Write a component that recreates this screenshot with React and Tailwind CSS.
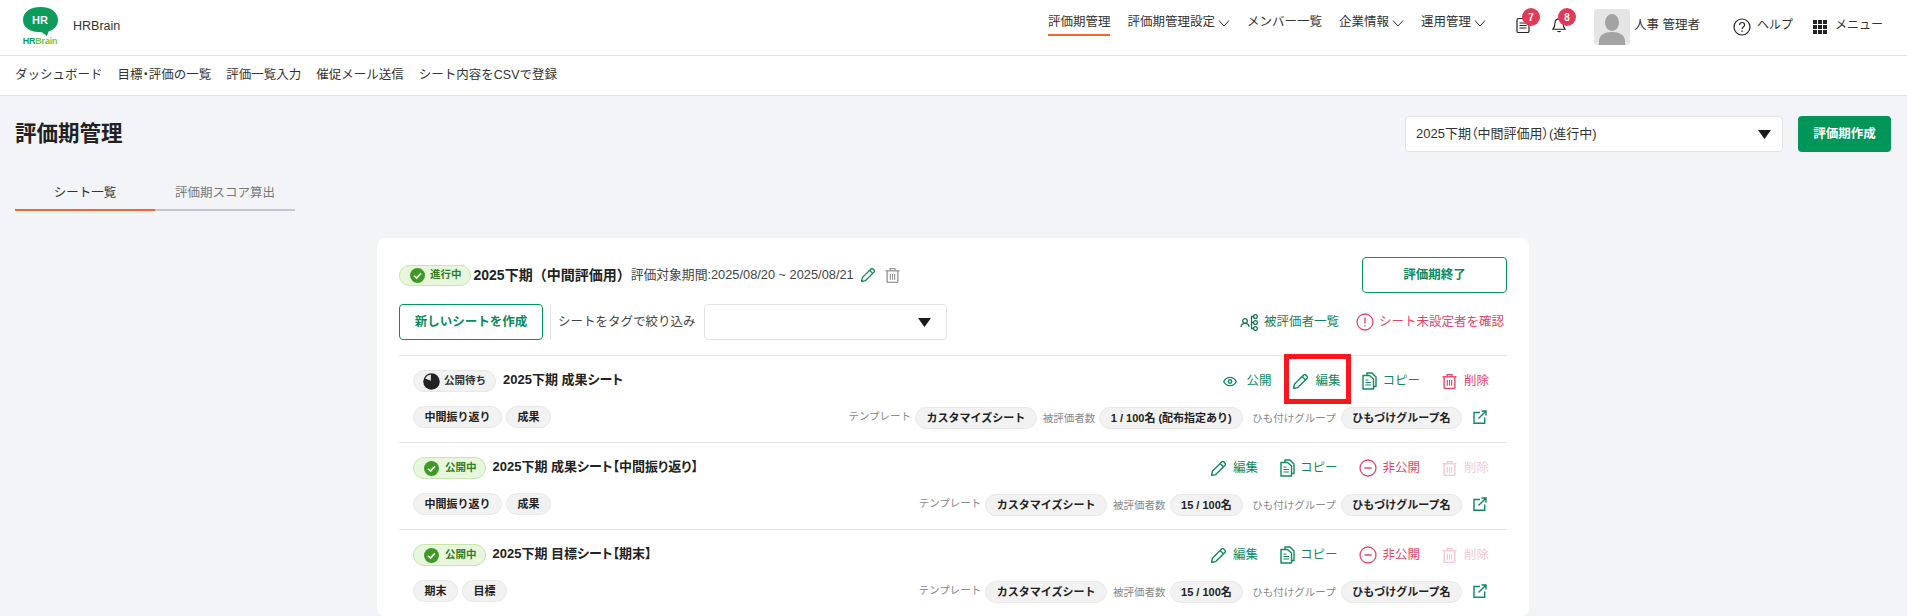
import React from "react";

const G = "#0f8a5c";
const R = "#e2476a";

const Chevron = () => (
  <svg width="12" height="12" viewBox="0 0 12 12" fill="none" stroke="#333" strokeWidth="1"><path d="M1 3.500 6 9l5-5.500" /></svg>
);
const Caret = () => (
  <svg width="13" height="9" viewBox="0 0 13 9" fill="#1a1a1a"><path d="M0 0h13L6.500 9z" /></svg>
);
const PencilI = ({ c = G, s = 15 }) => (
  <svg width={s} height={s} viewBox="1 1 14 14" fill="none" stroke={c} strokeWidth="1.300" strokeLinejoin="round"><path d="M1.500 14.500 2.300 10.600 10.900 2a1.500 1.500 0 0 1 2.100 0l1 1a1.500 1.500 0 0 1 0 2.100L5.400 13.700z" /><path d="M9.600 3.400 12.600 6.400" /></svg>
);
const TrashI = ({ c = R, s = 15 }) => (
  <svg width={s} height={s} viewBox="1 1 14 14" fill="none" stroke={c} strokeWidth="1.300"><path d="M1.500 3.600h13" /><path d="M5.800 3.400V1.500h4.400v1.900" /><path d="M3 3.800v9.700a1 1 0 0 0 1 1h8a1 1 0 0 0 1-1V3.800" /><path d="M6 6.500v5.500M8 6.500v5.500M10 6.500v5.500" strokeWidth="1.100" /></svg>
);
const CopyI = () => (
  <svg width="15" height="18" viewBox="0 0 15 18" fill="none" stroke={G} strokeWidth="1.400" strokeLinejoin="round"><path d="M5 3V1h5l4 4v9.500h-2" /><path d="M1 3.500h6.500L11.500 7v10H1z" /><path d="M3.400 8h3M3.400 10.500h5.500M3.400 13h5.500" strokeWidth="1.200" /></svg>
);
const EyeI = () => (
  <svg width="14" height="11" viewBox="0 0 16 12" fill="none" stroke={G} strokeWidth="1.500"><path d="M.8 6C2.500 2.800 5 1.200 8 1.200S13.500 2.800 15.200 6C13.500 9.200 11 10.800 8 10.800S2.500 9.200.8 6z" /><circle cx="8" cy="6" r="2" /></svg>
);
const ExtI = () => (
  <svg width="14" height="14" viewBox="0 0 14 14" fill="none" stroke={G} strokeWidth="1.400"><path d="M7 2.500H1v10.700h10.700V7.500" /><path d="M5.500 8.500 12.800 1.200M8.500 1h4.500v4.500" /></svg>
);
const CheckCircle = ({ s = 15 }) => (
  <svg width={s} height={s} viewBox="0 0 16 16"><circle cx="8" cy="8" r="8" fill="#3f9a25" /><path d="M4.300 8.300 7 10.800 11.700 5.600" fill="none" stroke="#fff" strokeWidth="1.700" /></svg>
);
const PendingI = () => (
  <svg width="17" height="17" viewBox="0 0 16 16"><circle cx="8" cy="8" r="7.800" fill="#222" /><path d="M7.400 1.500V7.400L2 5.200A7 7 0 0 1 7.400 1.500z" fill="#e9e9e9" /></svg>
);
const MinusCircle = () => (
  <svg width="18" height="18" viewBox="0 0 18 18" fill="none" stroke={R} strokeWidth="1.300"><circle cx="9" cy="9" r="8" /><path d="M5.500 9h7" strokeWidth="1.500" /></svg>
);
const AlertCircle = () => (
  <svg width="18" height="18" viewBox="0 0 18 18" fill="none" stroke={R} strokeWidth="1.300"><circle cx="9" cy="9" r="8" /><path d="M9 4.500v6M9 12.200v1.400" strokeWidth="1.400" /></svg>
);
const TreeI = () => (
  <svg width="19" height="17" viewBox="0 0 19 17" fill="none" stroke="#17764f" strokeWidth="1.300"><circle cx="5" cy="7" r="2.300" /><path d="M1 13c.3-2.500 1.800-3.600 4-3.600s3.700 1.100 4 3.600" /><circle cx="15.500" cy="2.500" r="1.900" /><circle cx="15.500" cy="8.500" r="1.900" /><circle cx="15.500" cy="14.500" r="1.900" /><path d="M13.500 2.500h-2v12h2M11.500 8.500h2" /></svg>
);

const Logo = () => (
  <div className="flex flex-col items-center w-[36px]">
    <div className="relative w-[35px] h-[28px]">
      <svg width="35" height="29" viewBox="0 0 35 29" className="absolute inset-0">
        <path d="M17.500 0C27 0 35 4.500 35 13c0 6-4.500 10-9.500 11.500L24 29l-5-3.800C8 25.500 0 21 0 13 0 4.500 8 0 17.500 0z" fill="#0c9b5b" />
      </svg>
      <span className="absolute inset-x-0 top-[5px] text-center text-white font-bold text-[11px] leading-[16px]">HR</span>
    </div>
    <div className="text-[9px] leading-[10px] font-bold whitespace-nowrap tracking-[-0.2px] mt-[1px]">
      <span className="text-[#0c9b5b]">HR</span><span className="text-[#7cc243]">Brain</span>
    </div>
  </div>
);

const NavItem = ({ children, chev, active }) => (
  <div className={"h-[26px] pt-[1px] flex items-center gap-[3px] text-[12.500px] text-[#333] border-b-[2px] " + (active ? "border-[#f0682b]" : "border-transparent")}>
    <span>{children}</span>
    {chev && <Chevron />}
  </div>
);

const Badge = ({ n, cls }) => (
  <span className={"absolute flex items-center justify-center w-[18px] h-[18px] rounded-full bg-[#e03a57] text-white text-[10px] font-bold " + cls}>{n}</span>
);

const Pill = ({ children }) => (
  <span className="inline-flex items-center h-[22px] px-[10.500px] rounded-full bg-[#f2f2f2] border border-[#e8e8e8] text-[11px] font-bold text-[#222] whitespace-nowrap">{children}</span>
);
const Meta = ({ children }) => <span className="text-[10.500px] text-[#8a8a8a] whitespace-nowrap">{children}</span>;

const Action = ({ icon, label, c, gap = "gap-[7px]", op = "" }) => (
  <div className={"flex items-center text-[12.500px] whitespace-nowrap " + gap + " " + op} style={{ color: c }}>
    {icon}
    <span>{label}</span>
  </div>
);

const StatusOn = ({ label }) => (
  <span className="inline-flex items-center gap-[6px] h-[22px] pl-[10px] pr-[8px] rounded-full bg-[#e8f6dd] border border-[#c6e6ae] text-[10.500px] font-bold text-[#2f7d1f] whitespace-nowrap">
    <CheckCircle />{label}
  </span>
);

const Sheet = ({ status, title, actions, tags, count, last }) => (
  <div className={"pl-[14px] pr-[18px] pt-[14px] pb-[14px] " + (last ? "" : "border-b border-[#e5e5e5]")}>
    <div className="flex items-center justify-between h-[22px]">
      <div className="flex items-center gap-[7px]">
        {status}
        <span className="pb-[2px] text-[13px] font-bold text-[#222] whitespace-nowrap [font-feature-settings:'palt']">{title}</span>
      </div>
      <div className="flex items-center gap-[22px]">{actions}</div>
    </div>
    <div className="flex items-center justify-between h-[22px] mt-[14px] pr-[2px]">
      <div className="flex items-center gap-[4px]">{tags.map((t) => <Pill key={t}>{t}</Pill>)}</div>
      <div className="flex items-center">
        <Meta>テンプレート</Meta>
        <span className="ml-[4px]"><Pill>カスタマイズシート</Pill></span>
        <span className="ml-[6px]"><Meta>被評価者数</Meta></span>
        <span className="ml-[4px]"><Pill>{count}</Pill></span>
        <span className="ml-[9px]"><Meta>ひも付けグループ</Meta></span>
        <span className="ml-[5px]"><Pill>ひもづけグループ名</Pill></span>
        <span className="ml-[11px] flex"><ExtI /></span>
      </div>
    </div>
  </div>
);

const edit = <Action key="e" c={G} icon={<PencilI />} label="編集" />;
const copy = <Action key="c" c={G} gap="gap-[5px]" icon={<CopyI />} label="コピー" />;
const unpub = <Action key="u" c={R} gap="gap-[5px]" icon={<MinusCircle />} label="非公開" />;
const delOff = <Action key="d" c={R} op="opacity-30" icon={<TrashI />} label="削除" />;
const liveActions = [edit, copy, unpub, delOff];

export default function App() {
  return (
    <div className="relative h-[616px] overflow-hidden bg-[#f2f4f8] text-[#333]" style={{ fontFamily: '"Liberation Sans","Noto Sans CJK JP",sans-serif' }}>
      <header className="h-[56px] bg-white border-b border-[#e3e3e3] flex items-center justify-between pl-[22px] pr-[24px] pb-[2px]">
        <div className="flex items-center gap-[15px]">
          <Logo />
          <span className="text-[12.500px] text-[#333]">HRBrain</span>
        </div>
        <div className="flex items-center">
          <nav className="flex items-center gap-[17px] mb-[7px]">
            <NavItem active>評価期管理</NavItem>
            <NavItem chev>評価期管理設定</NavItem>
            <NavItem>メンバー一覧</NavItem>
            <NavItem chev>企業情報</NavItem>
            <NavItem chev>運用管理</NavItem>
          </nav>
          <div className="relative ml-[30px] mb-[3px] w-[14px] h-[16px] flex">
            <svg width="14" height="16" viewBox="0 0 14 16" fill="none" stroke="#222" strokeWidth="1.200"><rect x="1" y="1.500" width="12" height="14" rx="1.500" /><path d="M3.500 6h7M3.500 8.500h7M3.500 11h7" /></svg>
            <Badge n="7" cls="left-[6px] top-[-9px]" />
          </div>
          <div className="relative ml-[22px] mb-[3px] w-[14px] h-[16px] flex">
            <svg width="15" height="16" viewBox="0 0 15 16" fill="none" stroke="#222" strokeWidth="1.200"><path d="M7.500 1.500C4.800 1.500 3.200 3.500 3.200 6c0 3.500-1 5-2.200 6.500h13C12.800 11 11.800 9.500 11.800 6c0-2.500-1.600-4.500-4.300-4.500z" /><path d="M5.800 14.500c.5.800 3 .8 3.400 0" /></svg>
            <Badge n="8" cls="left-[6px] top-[-9px]" />
          </div>
          <div className="ml-[28px] w-[36px] h-[36px] rounded-[4px] bg-[#e5e5e5] overflow-hidden flex items-end justify-center">
            <svg width="26" height="31" viewBox="0 0 26 31" fill="#a3a3a3"><ellipse cx="13" cy="8.500" rx="7" ry="8.500" /><path d="M0 31v-4c0-6 6-9 13-9s13 3 13 9v4z" /></svg>
          </div>
          <span className="ml-[4px] mb-[3px] text-[12.500px] text-[#333] whitespace-nowrap">人事 管理者</span>
          <div className="ml-[33px] flex items-center gap-[6px] text-[12px] text-[#333]">
            <svg width="18" height="18" viewBox="0 0 18 18" fill="none" stroke="#222" strokeWidth="1.200"><circle cx="9" cy="9" r="8" /><path d="M6.500 7c0-1.500 1.100-2.500 2.600-2.500S11.600 5.500 11.600 7c0 2-2.500 2-2.500 4" /><path d="M9.100 12.500v1.400" /></svg>
            <span className="mb-[3px]">ヘルプ</span>
          </div>
          <div className="ml-[20px] flex items-center gap-[8px] text-[12px] text-[#333]">
            <div className="grid grid-cols-3 gap-[1px]">
              {[1, 2, 3, 4, 5, 6, 7, 8, 9].map((i) => <span key={i} className="w-[4px] h-[4px] bg-[#222]" />)}
            </div>
            <span className="mb-[3px]">メニュー</span>
          </div>
        </div>
      </header>

      <div className="h-[40px] bg-white border-b border-[#e3e3e3] flex items-center gap-[15px] pl-[15px] text-[12.500px] text-[#333]">
        <span>ダッシュボード</span>
        <span>目標<span className="[font-feature-settings:'palt']">・</span>評価の一覧</span>
        <span>評価一覧入力</span>
        <span>催促メール送信</span>
        <span>シート内容をCSVで登録</span>
      </div>

      <div className="flex items-center justify-between pl-[15px] pr-[16px] pt-[20px]">
        <h1 className="text-[21.500px] font-bold text-[#222]">評価期管理</h1>
        <div className="flex items-center gap-[15px]">
          <div className="w-[378px] h-[36px] bg-white border border-[#e3e3e6] rounded-[4px] flex items-center justify-between pl-[10px] pr-[11px] text-[13px] text-[#333] [font-feature-settings:'palt']">
            <span>2025下期（中間評価用）(進行中)</span>
            <Caret />
          </div>
          <button className="w-[93px] h-[36px] bg-[#00965a] rounded-[4px] text-white text-[12.500px] font-bold">評価期作成</button>
        </div>
      </div>

      <div className="flex mt-[24px] ml-[15px] text-[12.500px]">
        <div className="w-[140px] h-[35px] pt-[1px] flex items-center justify-center border-b-[2px] border-[#f0682b] text-[#333]">シート一覧</div>
        <div className="w-[140px] h-[35px] pt-[1px] flex items-center justify-center border-b-[2px] border-[#c4c6ca] text-[#777]">評価期スコア算出</div>
      </div>

      <main className="ml-[377px] mt-[27px] w-[1152px] bg-white rounded-[8px] px-[22px] pt-[19px]">
        <div className="flex items-center justify-between h-[36px]">
          <div className="flex items-center whitespace-nowrap">
            <span className="inline-flex items-center gap-[5px] h-[21px] pl-[10px] pr-[8px] rounded-full bg-[#e8f6dd] border border-[#c6e6ae] text-[10.500px] font-bold text-[#2f7d1f]">
              <CheckCircle />進行中
            </span>
            <span className="ml-[3px] text-[14px] font-bold text-[#222]">2025下期（中間評価用）</span>
            <span className="text-[12.800px] text-[#444]">評価対象期間:2025/08/20 ~ 2025/08/21</span>
            <span className="ml-[7px] flex"><PencilI s={14} /></span>
            <span className="ml-[10px] flex"><TrashI c="#999" s={15} /></span>
          </div>
          <button className="w-[145px] h-[36px] bg-white border border-[#00965a] rounded-[4px] text-[#0f8a5c] text-[12.500px] font-bold">評価期終了</button>
        </div>

        <div className="flex items-center justify-between h-[36px] mt-[11px]">
          <div className="flex items-center h-full whitespace-nowrap">
            <button className="w-[144px] h-[36px] bg-white border border-[#00965a] rounded-[4px] text-[#0f8a5c] text-[12.500px] font-bold">新しいシートを作成</button>
            <span className="ml-[7px] w-px h-full bg-[#e3e3e3]" />
            <span className="ml-[7px] text-[12.500px] text-[#444]">シートをタグで絞り込み</span>
            <div className="ml-[8px] w-[243px] h-[36px] bg-white border border-[#e3e3e6] rounded-[4px] flex items-center justify-end pr-[15px]">
              <Caret />
            </div>
          </div>
          <div className="flex items-center pr-[3px] whitespace-nowrap text-[12.500px]">
            <div className="flex items-center gap-[5px] text-[#17805a]"><TreeI /><span>被評価者一覧</span></div>
            <div className="flex items-center gap-[5px] ml-[17px]" style={{ color: R }}><AlertCircle /><span>シート未設定者を確認</span></div>
          </div>
        </div>

        <div className="mt-[15px] border-t border-[#e5e5e5]">
          <Sheet
            status={
              <span className="inline-flex items-center gap-[4px] h-[22px] pl-[9px] pr-[9px] rounded-full bg-[#f2f2f2] border border-[#e8e8e8] text-[10.500px] font-bold text-[#333] whitespace-nowrap">
                <PendingI />公開待ち
              </span>
            }
            title="2025下期 成果シート"
            actions={[
              <Action key="p" c={G} gap="gap-[9px]" icon={<EyeI />} label="公開" />,
              edit,
              copy,
              <Action key="d" c={R} icon={<TrashI />} label="削除" />,
            ]}
            tags={["中間振り返り", "成果"]}
            count="1 / 100名 (配布指定あり)"
          />
          <Sheet
            status={<StatusOn label="公開中" />}
            title="2025下期 成果シート【中間振り返り】"
            actions={liveActions}
            tags={["中間振り返り", "成果"]}
            count="15 / 100名"
          />
          <Sheet
            status={<StatusOn label="公開中" />}
            title="2025下期 目標シート【期末】"
            actions={liveActions}
            tags={["期末", "目標"]}
            count="15 / 100名"
            last
          />
        </div>
      </main>

      <div className="absolute left-[1284px] top-[354px] w-[67px] h-[50px] border-[5px] border-[#f5181c]" />
    </div>
  );
}
